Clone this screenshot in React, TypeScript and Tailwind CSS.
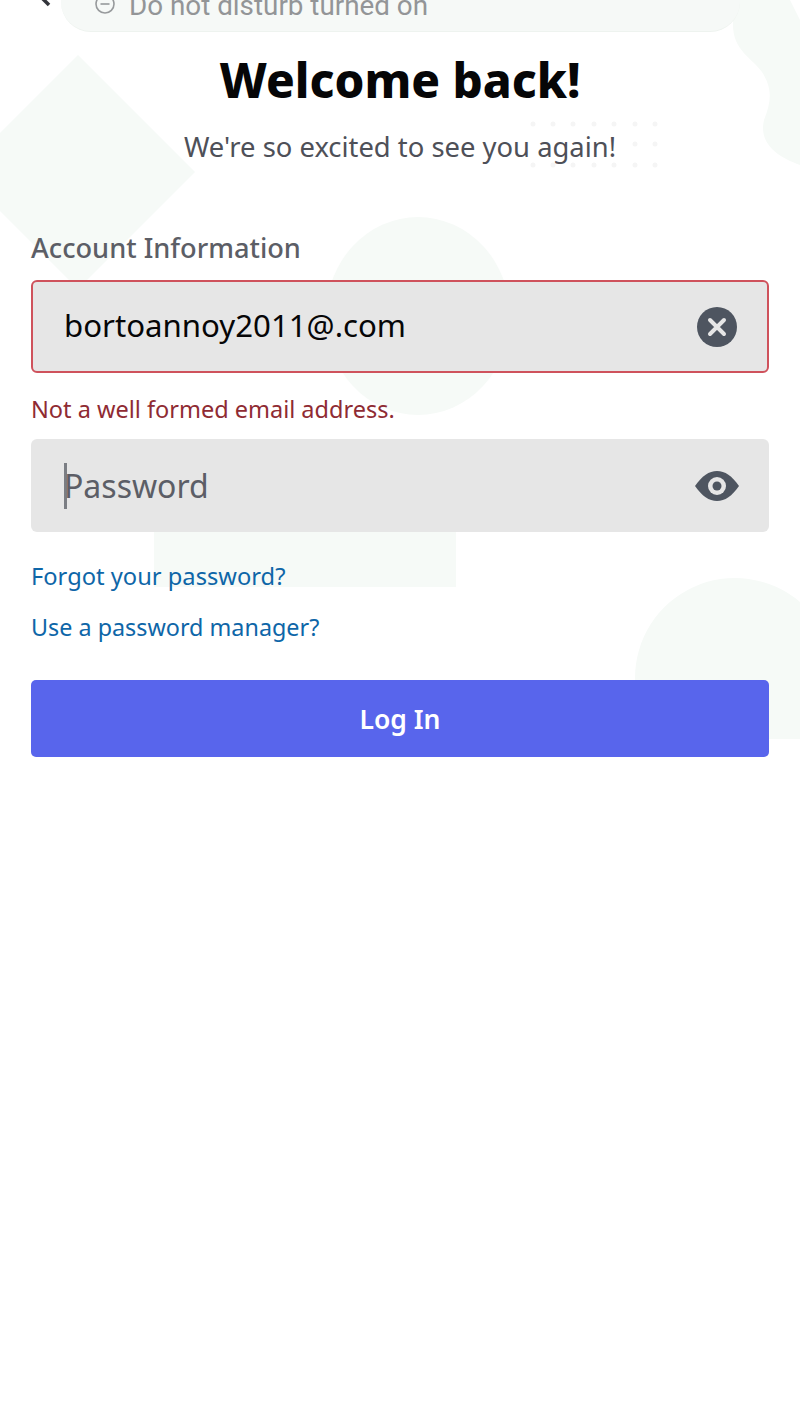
export default function App() {
  return (
    <div className="relative h-[1422px] w-[800px] overflow-hidden bg-white font-['Noto_Sans',sans-serif]">
      <svg className="absolute left-0 top-0" width="800" height="760" viewBox="0 0 800 760" fill="#f6faf7">
        <path d="M78 55 L195 172 L78 289 L-39 172 Z" />
        <ellipse cx="418" cy="316" rx="92" ry="99" />
        <rect x="154" y="500" width="302" height="87" />
        <path d="M635 739 V678 A100 100 0 0 1 800 602 V739 Z" />
        <path d="M733 0 V25 C733 50 752 58 762 72 C772 88 772 100 764 120 C758 145 780 158 800 165 V20 L790 0 Z" />
        <g fill="#f5f5f5">
          {[533, 553, 573, 594, 614, 635, 655].map((x) => (
            <g key={x}>
              <circle cx={x} cy="124" r="2.5" />
              <circle cx={x} cy="165" r="2.5" />
              {x > 630 && <circle cx={x} cy="144" r="2.5" />}
            </g>
          ))}
        </g>
      </svg>

      <div className="relative flex flex-col px-[31px]">
        <div className="flex h-[32px] items-start">
          <svg width="30" height="10" viewBox="0 0 30 10" className="shrink-0">
            <path d="M11 -2 L18 5" stroke="#33353b" strokeWidth="3.5" fill="none" />
          </svg>
          <div className="flex h-[32px] w-[679px] shrink-0 items-end overflow-hidden rounded-b-[30px] border-b border-[#eef3ef] bg-[#f6f9f7] pb-[10px] pl-[33px]">
            <svg width="22" height="22" viewBox="0 0 22 22" className="mb-[6px] shrink-0">
              <circle cx="11" cy="11" r="9" fill="none" stroke="#979a9c" strokeWidth="1.6" />
              <path d="M6.5 11 H15.5" stroke="#979a9c" strokeWidth="1.6" />
            </svg>
            <span className="ml-[13px] whitespace-nowrap font-['Roboto',sans-serif] text-[27.8px] leading-[30px] text-[#939597]">
              Do not disturb turned on
            </span>
          </div>
        </div>

        <h1 className="mt-[14px] text-center text-[47.5px] font-extrabold leading-[68px] text-[#060607]">Welcome back!</h1>
        <p className="mt-[14px] text-center text-[27.4px] leading-[38px] text-[#4e5058]">We're so excited to see you again!</p>

        <label className="mt-[64px] text-[27.2px] font-medium leading-[36px] text-[#5c5e66]">Account Information</label>

        <div className="mt-[14px] flex h-[93px] items-center justify-between rounded-[6px] border-2 border-[#cf525c] bg-[#e6e6e6] pl-[31px] pr-[30px]">
          <span className="mb-[4px] text-[31.2px] leading-[44px] text-[#060607]">bortoannoy2011@.com</span>
          <svg width="40" height="40" viewBox="0 0 40 40">
            <circle cx="20" cy="20" r="20" fill="#4e5560" />
            <path d="M13 13 L27 27 M27 13 L13 27" stroke="#e6e6e6" strokeWidth="4" strokeLinecap="round" />
          </svg>
        </div>

        <p className="mt-[18px] text-[23.5px] leading-[36px] text-[#8f2b33]">Not a well formed email address.</p>

        <div className="mt-[12px] flex h-[93px] items-center justify-between rounded-[6px] bg-[#e6e6e6] pl-[33px] pr-[30px]">
          <div className="flex items-center">
            <span className="mr-[-3px] h-[46px] w-[3px] bg-[#7b7e84]" />
            <span className="text-[32px] leading-[44px] text-[#5c5e66]">Password</span>
          </div>
          <svg width="44" height="30" viewBox="0 0 44 30">
            <path d="M0 15 C7 5 14 0 22 0 C30 0 37 5 44 15 C37 25 30 30 22 30 C14 30 7 25 0 15 Z" fill="#4e5560" />
            <circle cx="22" cy="15" r="9" fill="#e6e6e6" />
            <circle cx="22" cy="15" r="4.5" fill="#4e5560" />
          </svg>
        </div>

        <a className="mt-[26px] text-[23.7px] leading-[36px] text-[#0e66a8]">Forgot your password?</a>
        <a className="mt-[15px] text-[23.35px] leading-[36px] text-[#0e66a8]">Use a password manager?</a>

        <button className="mt-[35px] flex h-[77px] items-center justify-center rounded-[5px] bg-[#5865ec] pt-[2px] text-[26.5px] font-semibold text-white">
          Log In
        </button>
      </div>
    </div>
  );
}
